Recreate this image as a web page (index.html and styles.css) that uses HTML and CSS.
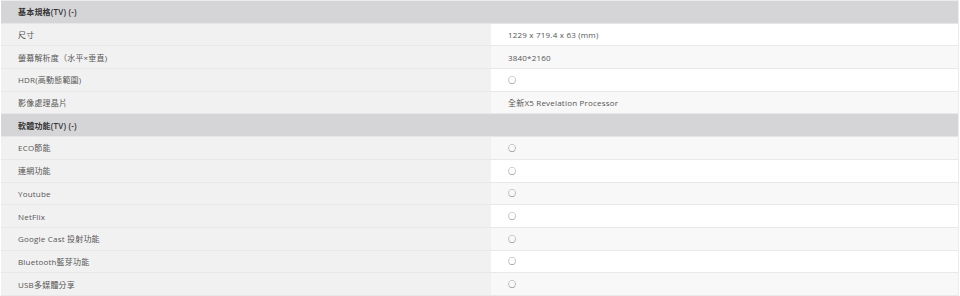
FILE: index.html
```html
<!DOCTYPE html>
<html lang="zh-Hant">
<head>
<meta charset="utf-8">
<title>規格</title>
<link rel="stylesheet" href="styles.css">
</head>
<body>
<div class="spec">
  <div class="group">基本規格(TV) (-)</div>
  <div class="row"><div class="label">尺寸</div><div class="value">1229 x 719.4 x 63 (mm)</div></div>
  <div class="row"><div class="label">螢幕解析度（水平×垂直)</div><div class="value">3840*2160</div></div>
  <div class="row"><div class="label">HDR(高動態範圍)</div><div class="value"><span class="yes">○</span></div></div>
  <div class="row"><div class="label">影像處理晶片</div><div class="value">全新X5 Revelation Processor</div></div>
  <div class="group">軟體功能(TV) (-)</div>
  <div class="row"><div class="label">ECO節能</div><div class="value"><span class="yes">○</span></div></div>
  <div class="row"><div class="label">連網功能</div><div class="value"><span class="yes">○</span></div></div>
  <div class="row"><div class="label">Youtube</div><div class="value"><span class="yes">○</span></div></div>
  <div class="row"><div class="label">NetFlix</div><div class="value"><span class="yes">○</span></div></div>
  <div class="row"><div class="label">Google Cast 投射功能</div><div class="value"><span class="yes">○</span></div></div>
  <div class="row"><div class="label">Bluetooth藍芽功能</div><div class="value"><span class="yes">○</span></div></div>
  <div class="row"><div class="label">USB多媒體分享</div><div class="value"><span class="yes">○</span></div></div>
</div>
</body>
</html>
```
FILE: styles.css
```css
html, body {
  margin: 0;
  padding: 0;
  background: #ffffff;
}
body {
  font-family: "Open Sans", "Noto Sans CJK TC", sans-serif;
  font-size: 8px;
  letter-spacing: 0.2px;
  color: #555555;
}
.spec {
  width: 957px;
  margin-left: 1px;
  border-top: 1px solid #ececec;
  border-right: 1px solid #ececec;
}
.group {
  height: 22.7px;
  box-sizing: border-box;
  display: flex;
  align-items: center;
  padding-left: 17px;
  background: #d5d5d7;
  color: #333333;
  font-weight: 600;
  border-bottom: 1px solid #e6e6e6;
}
.row {
  display: grid;
  grid-template-columns: 490px 1fr;
  height: 22.7px;
  box-sizing: border-box;
  border-bottom: 1px solid #e8e8e8;
}
.label {
  display: flex;
  align-items: center;
  padding-left: 17px;
  background: #f1f1f1;
}
.value {
  display: flex;
  align-items: center;
  padding-left: 17px;
  background: #ffffff;
}
.row:nth-child(odd) .value {
  background: #f8f8f8;
}
.yes {
  font-family: "Noto Sans CJK TC", sans-serif;
  font-size: 8px;
  font-weight: 700;
  line-height: 1;
  color: #555555;
  letter-spacing: 0;
}
```
